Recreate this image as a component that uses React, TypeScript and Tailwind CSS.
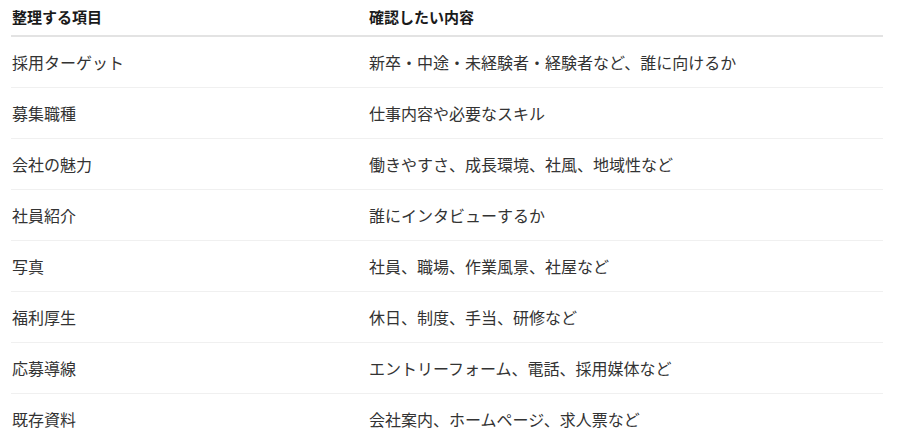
const rows = [
  ["採用ターゲット", "新卒・中途・未経験者・経験者など、誰に向けるか"],
  ["募集職種", "仕事内容や必要なスキル"],
  ["会社の魅力", "働きやすさ、成長環境、社風、地域性など"],
  ["社員紹介", "誰にインタビューするか"],
  ["写真", "社員、職場、作業風景、社屋など"],
  ["福利厚生", "休日、制度、手当、研修など"],
  ["応募導線", "エントリーフォーム、電話、採用媒体など"],
  ["既存資料", "会社案内、ホームページ、求人票など"],
];

export default function App() {
  return (
    <div
      className="bg-white pl-[11px] pr-[17px] w-[900px] h-[447px] overflow-hidden"
      style={{ fontFamily: '"Noto Sans CJK JP", "Noto Sans", sans-serif' }}
    >
      <table className="w-full border-collapse text-[16px] leading-6">
        <thead>
          <tr className="border-b-2 border-[#e3e3e3] text-[15px]">
            <th className="w-[358px] pl-px pt-[5px] pb-[6px] text-left font-bold text-[#1a1a1a]">
              整理する項目
            </th>
            <th className="pt-[5px] pb-[6px] text-left font-bold text-[#1a1a1a]">確認したい内容</th>
          </tr>
        </thead>
        <tbody>
          {rows.map(([item, detail], i) => (
            <tr
              key={item}
              className={i < rows.length - 1 ? "border-b border-[#f0f0f0]" : ""}
            >
              <td className="pl-px py-[13px] text-[#333]">{item}</td>
              <td className="py-[13px] text-[#333]">{detail}</td>
            </tr>
          ))}
        </tbody>
      </table>
    </div>
  );
}
